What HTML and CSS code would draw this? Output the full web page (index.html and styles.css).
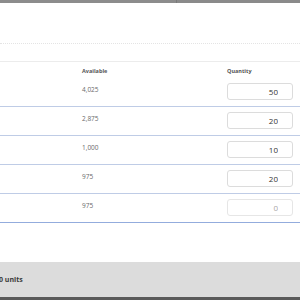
FILE: index.html
```html
<!DOCTYPE html>
<html lang="en">
<head>
  <meta charset="UTF-8" />
  <title>Stock allocation</title>
  <link rel="stylesheet" href="styles.css">
</head>
<body>
  <div class="topbar">
    <div class="topbar-left"></div>
    <div class="topbar-right"></div>
  </div>

  <div class="title-area"></div>

  <div class="stock-table">
    <div class="row head">
      <div class="cell name"></div>
      <div class="cell avail">Available</div>
      <div class="cell qty">Quantity</div>
    </div>
    <div class="row">
      <div class="cell name"></div>
      <div class="cell avail">4,025</div>
      <div class="cell qty"><input class="qty-input" type="text" value="50"></div>
    </div>
    <div class="row">
      <div class="cell name"></div>
      <div class="cell avail">2,875</div>
      <div class="cell qty"><input class="qty-input" type="text" value="20"></div>
    </div>
    <div class="row">
      <div class="cell name"></div>
      <div class="cell avail">1,000</div>
      <div class="cell qty"><input class="qty-input" type="text" value="10"></div>
    </div>
    <div class="row">
      <div class="cell name"></div>
      <div class="cell avail">975</div>
      <div class="cell qty"><input class="qty-input" type="text" value="20"></div>
    </div>
    <div class="row last">
      <div class="cell name"></div>
      <div class="cell avail">975</div>
      <div class="cell qty"><input class="qty-input empty" type="text" placeholder="0"></div>
    </div>
  </div>

  <div class="summary">
    <span class="summary-text">0 units</span>
  </div>
  <div class="bottombar"></div>
</body>
</html>
```

FILE: styles.css
```css
body {
  margin: 0;
  font-family: 'Open Sans', sans-serif;
  background: #fff;
  color: #333;
  width: 300px;
  height: 300px;
  overflow: hidden;
}
.topbar {
  display: flex;
  height: 3px;
}
.topbar-left {
  width: 176px;
  background: #8c8c8c;
}
.topbar-right {
  flex: 1;
  background: #8a8a8a;
  border-left: 1px solid #7a7a7a;
}
.title-area {
  height: 40px;
  border-bottom: 1px dotted #e4e4e4;
}
.stock-table {
  margin-top: 17px;
  border-top: 1px solid #ececec;
}
.row {
  display: flex;
  height: 28px;
  border-bottom: 1px solid #bfcce6;
}
.row.head {
  height: 16px;
  border-bottom: none;
}
.row.last {
  border-bottom-color: #93acdd;
}
.cell {
  box-sizing: border-box;
}
.name {
  width: 82px;
}
.avail {
  width: 145px;
  font-size: 6.5px;
  color: #6a6a6a;
  padding-top: 7px;
}
.qty {
  width: 66px;
  padding-top: 5px;
}
.head .avail,
.head .qty {
  font-size: 5.5px;
  font-weight: bold;
  color: #555;
  padding-top: 5px;
}
.qty-input {
  display: block;
  box-sizing: border-box;
  width: 66px;
  height: 17px;
  border: 1px solid #dcdcdc;
  border-radius: 3px;
  padding: 0 14px 0 0;
  margin: 0;
  text-align: right;
  font-family: 'Open Sans', sans-serif;
  font-size: 8px;
  color: #333;
  background: #fff;
  outline: none;
}
.qty-input.empty {
  border-color: #e6e6e6;
}
.qty-input.empty::placeholder {
  color: #a8a8a8;
}
.summary {
  margin-top: 39px;
  height: 35px;
  background: #dcdcdc;
  display: flex;
  align-items: center;
}
.summary-text {
  margin-left: -1px;
  font-size: 7px;
  font-weight: bold;
  color: #3a3a3a;
}
.bottombar {
  height: 3px;
  background: #5a5a5a;
}
```
